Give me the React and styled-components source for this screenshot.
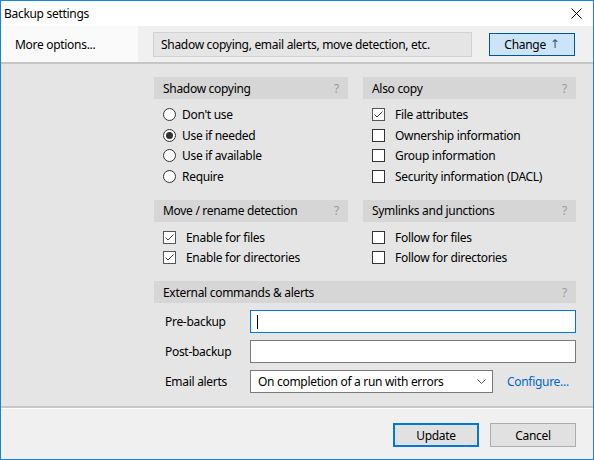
import React from "react";
import styled, { createGlobalStyle } from "styled-components";

const GlobalStyle = createGlobalStyle`
  html, body {
    margin: 0;
    padding: 0;
  }
  body {
    font-family: "Noto Sans", "Open Sans", sans-serif;
    font-size: 12px;
    letter-spacing: -0.3px;
    color: #000;
  }
  * {
    box-sizing: border-box;
  }
`;

const Window = styled.div`
  width: 594px;
  height: 460px;
  border: 1px solid #1883d7;
  display: flex;
  flex-direction: column;
  background: #f0f0f0;
  overflow: hidden;
`;

const TitleBar = styled.div`
  height: 25px;
  flex: none;
  background: #fff;
  display: flex;
  align-items: center;
  justify-content: space-between;
  padding: 0 11px 0 3px;
`;

const OptionsRow = styled.div`
  height: 38px;
  flex: none;
  display: flex;
  border-bottom: 2px solid #c6c6c6;
`;

const OptionsLabel = styled.div`
  width: 137px;
  background: #fafafa;
  display: flex;
  align-items: center;
  padding-left: 14px;
`;

const OptionsBody = styled.div`
  flex: 1;
  background: #f0f0f0;
  display: flex;
  align-items: center;
  justify-content: space-between;
  padding: 0 18px 0 15px;
`;

const Summary = styled.div`
  width: 319px;
  height: 25px;
  background: #e5e5e5;
  border: 1px solid #d2d2d2;
  display: flex;
  align-items: center;
  padding-left: 7px;
`;

const Button = styled.button`
  font: inherit;
  letter-spacing: inherit;
  color: #000;
  width: 86px;
  height: ${(p) => (p.$small ? 23 : 24)}px;
  background: ${(p) => (p.$accent ? "#cce4f7" : "#e1e1e1")};
  border: ${(p) =>
    p.$accent
      ? "1px solid #005499"
      : p.$default
      ? "2px solid #0078d7"
      : "1px solid #adadad"};
  padding: 0;
  display: flex;
  align-items: center;
  justify-content: center;
  gap: 4px;
`;

const Arrow = styled.span`
  color: #2d5b8a;
  font-family: "DejaVu Sans", sans-serif;
  font-size: 12px;
`;

const Content = styled.div`
  flex: 1;
  background: #e5e5e5;
  padding: 13px 17px 0 153px;
`;

const Grid = styled.div`
  display: grid;
  grid-template-columns: 194px 213px;
  column-gap: 15px;
  row-gap: 13px;
  align-items: start;
`;

const Section = styled.div`
  grid-column: ${(p) => (p.$wide ? "1 / -1" : "auto")};
`;

const SectionHeader = styled.div`
  height: 22px;
  background: #d6d6d6;
  display: flex;
  align-items: center;
  justify-content: space-between;
  padding: 0 9px 0 9px;
`;

const Help = styled.span`
  color: #9a9a9a;
`;

const ItemList = styled.div`
  padding: 5.5px 0 0 ${(p) => p.$indent}px;
`;

const Item = styled.div`
  height: 20.5px;
  display: flex;
  align-items: center;
  gap: ${(p) => p.$gap}px;
`;

const RadioMark = styled.span`
  width: 13px;
  height: 13px;
  border-radius: 50%;
  border: 1px solid #333;
  background: #fff;
  display: flex;
  align-items: center;
  justify-content: center;

  &::after {
    content: "";
    width: 7px;
    height: 7px;
    border-radius: 50%;
    background: ${(p) => (p.$on ? "#333" : "transparent")};
  }
`;

const CheckMark = styled.span`
  width: 13px;
  height: 13px;
  border: 1px solid ${(p) => (p.$on ? "#555" : "#333")};
  background: #fff;
  display: flex;
  align-items: center;
  justify-content: center;
`;

const Fields = styled.div`
  padding: 7px 0 0 11px;
  display: flex;
  flex-direction: column;
  gap: 7px;
`;

const FieldRow = styled.div`
  display: grid;
  grid-template-columns: 85px 1fr;
  align-items: center;
  height: 23px;
`;

const TextField = styled.div`
  height: 23px;
  background: #fff;
  border: 1px solid ${(p) => (p.$focused ? "#0078d7" : "#7a7a7a")};
  display: flex;
  align-items: center;
  padding-left: 6px;
`;

const Caret = styled.span`
  width: 1px;
  height: 14px;
  background: #000;
`;

const SelectWrap = styled.div`
  display: flex;
  align-items: center;
  gap: 14px;
`;

const Select = styled.div`
  width: 243px;
  height: 23px;
  background: #fff;
  border: 1px solid #7a7a7a;
  display: flex;
  align-items: center;
  justify-content: space-between;
  padding: 0 6px 0 7px;
`;

const Link = styled.span`
  color: #0066cc;
`;

const Footer = styled.div`
  height: 53px;
  flex: none;
  border-top: 2px solid #c8c8c8;
  box-shadow: inset 0 1px 0 #fff;
  background: #f0f0f0;
  display: flex;
  justify-content: flex-end;
  align-items: flex-start;
  gap: 11px;
  padding: 15px 17px 0 0;
`;

const Radio = ({ on, children }) => (
  <Item $gap={6}>
    <RadioMark $on={on} />
    <span>{children}</span>
  </Item>
);

const Check = ({ on, children }) => (
  <Item $gap={10}>
    <CheckMark $on={on}>
      {on && (
        <svg width="11" height="11" viewBox="0 0 11 11">
          <path d="M1.5 5.5 L4 8 L9.5 2.5" fill="none" stroke="#444" strokeWidth="1" />
        </svg>
      )}
    </CheckMark>
    <span>{children}</span>
  </Item>
);

const Header = ({ children }) => (
  <SectionHeader>
    <span>{children}</span>
    <Help>?</Help>
  </SectionHeader>
);

export default function App() {
  return (
    <>
      <GlobalStyle />
      <Window>
        <TitleBar>
          <span>Backup settings</span>
          <svg width="11" height="11" viewBox="0 0 11 11">
            <path d="M0.5 0.5 L10.5 10.5 M10.5 0.5 L0.5 10.5" stroke="#000" strokeWidth="1" />
          </svg>
        </TitleBar>

        <OptionsRow>
          <OptionsLabel>More options...</OptionsLabel>
          <OptionsBody>
            <Summary>Shadow copying, email alerts, move detection, etc.</Summary>
            <Button $accent $small>
              Change <Arrow>↑</Arrow>
            </Button>
          </OptionsBody>
        </OptionsRow>

        <Content>
          <Grid>
            <Section>
              <Header>Shadow copying</Header>
              <ItemList $indent={9}>
                <Radio>Don't use</Radio>
                <Radio on>Use if needed</Radio>
                <Radio>Use if available</Radio>
                <Radio>Require</Radio>
              </ItemList>
            </Section>
            <Section>
              <Header>Also copy</Header>
              <ItemList $indent={9}>
                <Check on>File attributes</Check>
                <Check>Ownership information</Check>
                <Check>Group information</Check>
                <Check>Security information (DACL)</Check>
              </ItemList>
            </Section>

            <Section>
              <Header>Move / rename detection</Header>
              <ItemList $indent={9}>
                <Check on>Enable for files</Check>
                <Check on>Enable for directories</Check>
              </ItemList>
            </Section>
            <Section>
              <Header>Symlinks and junctions</Header>
              <ItemList $indent={9}>
                <Check>Follow for files</Check>
                <Check>Follow for directories</Check>
              </ItemList>
            </Section>

            <Section $wide>
              <Header>External commands &amp; alerts</Header>
              <Fields>
                <FieldRow>
                  <span>Pre-backup</span>
                  <TextField $focused>
                    <Caret />
                  </TextField>
                </FieldRow>
                <FieldRow>
                  <span>Post-backup</span>
                  <TextField />
                </FieldRow>
                <FieldRow>
                  <span>Email alerts</span>
                  <SelectWrap>
                    <Select>
                      <span>On completion of a run with errors</span>
                      <svg width="9" height="6" viewBox="0 0 9 6">
                        <path d="M0.5 0.5 L4.5 4.5 L8.5 0.5" fill="none" stroke="#555" strokeWidth="1" />
                      </svg>
                    </Select>
                    <Link>Configure...</Link>
                  </SelectWrap>
                </FieldRow>
              </Fields>
            </Section>
          </Grid>
        </Content>

        <Footer>
          <Button $default>Update</Button>
          <Button>Cancel</Button>
        </Footer>
      </Window>
    </>
  );
}
